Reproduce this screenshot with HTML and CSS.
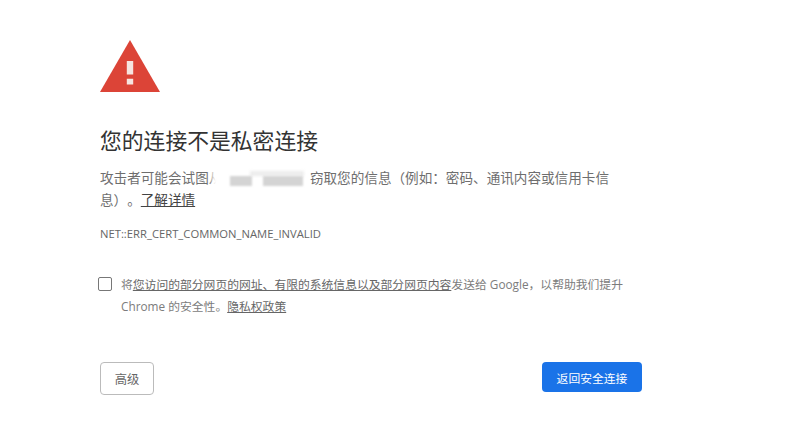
FILE: index.html
```html
<!DOCTYPE html>
<html lang="zh-CN">
<head>
<meta charset="utf-8">
<title>隐私设置错误</title>
<link rel="stylesheet" href="styles.css">
</head>
<body>
<main class="page">
  <svg class="icon" viewBox="0 0 60 52" aria-hidden="true">
    <path class="tri" d="M30 0 L60 52 H0 Z"/>
    <path class="mark" d="M26.8 21 H33.2 V34.4 H26.8 Z M26.8 38.8 H33.2 V44.6 H26.8 Z"/>
  </svg>
  <h1 class="title">您的连接不是私密连接</h1>
  <p class="desc">攻击者可能会试图从<span class="redact"><i class="patch"></i><i class="band"></i><i class="bar b1"></i><i class="bar b2"></i></span>窃取您的信息（例如：密码、通讯内容或信用卡信息）。<a class="link" href="#">了解详情</a></p>
  <p class="code">NET::ERR_CERT_COMMON_NAME_INVALID</p>
  <div class="report">
    <span class="box"></span>
    <p class="report-text">将<a class="sublink" href="#">您访问的部分网页的网址、有限的系统信息以及部分网页内容</a>发送给 Google，以帮助我们提升 Chrome 的安全性。<a class="sublink" href="#">隐私权政策</a></p>
  </div>
  <div class="actions">
    <button class="btn ghost">高级</button>
    <button class="btn primary">返回安全连接</button>
  </div>
</main>
</body>
</html>
```
FILE: styles.css
```css
html, body { margin: 0; padding: 0; background: #fff; }
body { font-family: "Open Sans", "Noto Sans CJK SC", sans-serif; color: #6e6e6e; text-spacing-trim: space-all; }
.page { width: 542px; margin-left: 100px; padding-top: 40px; display: flex; flex-direction: column; }
.icon { width: 60px; height: 52px; display: block; }
.tri { fill: #dc4437; }
.mark { fill: #f6e4e0; }
.title { margin: 32px 0 0; font-size: 21.8px; line-height: 34px; font-weight: 400; color: #333; }
.desc { margin: 9px 0 0; font-size: 13.6px; line-height: 22px; width: 520px; }
.link { color: #444; text-decoration: underline; }
.redact { display: inline-block; position: relative; width: 87.6px; height: 14px; vertical-align: -1px; }
.patch { position: absolute; left: -10px; width: 34px; top: -9px; height: 28px; background: #fff; filter: blur(2px); }
.band { position: absolute; left: 28px; width: 54px; top: 1px; height: 5px; background: #ececec; filter: blur(1.5px); }
.bar { position: absolute; top: 6px; height: 10px; background: #d4d4d4; filter: blur(1.2px); }
.b1 { left: 8px; width: 22px; }
.b2 { left: 41px; width: 40px; }
.code { margin: 14px 0 0; font-size: 11.25px; line-height: 18px; color: #666; }
.report { display: flex; margin-top: 30px; align-items: flex-start; }
.box { width: 12px; height: 12px; border: 1px solid #777; border-radius: 2px; margin: 4px 9px 0 -2px; flex: none; }
.report-text { margin: 0; font-size: 11.8px; line-height: 22px; width: 521px; color: #7c7c7c; }
.sublink { color: #666; text-decoration: underline; }
.actions { display: flex; justify-content: space-between; align-items: flex-start; margin-top: 45px; }
.btn { font-family: inherit; border-radius: 4px; padding: 0; cursor: pointer; }
.ghost { width: 54px; height: 33px; font-size: 12.3px; background: #fff; border: 1px solid #bbb; color: #666; }
.primary { width: 100px; height: 30px; font-size: 11.8px; background: #1a73e8; border: 0; color: #fff; }
```
